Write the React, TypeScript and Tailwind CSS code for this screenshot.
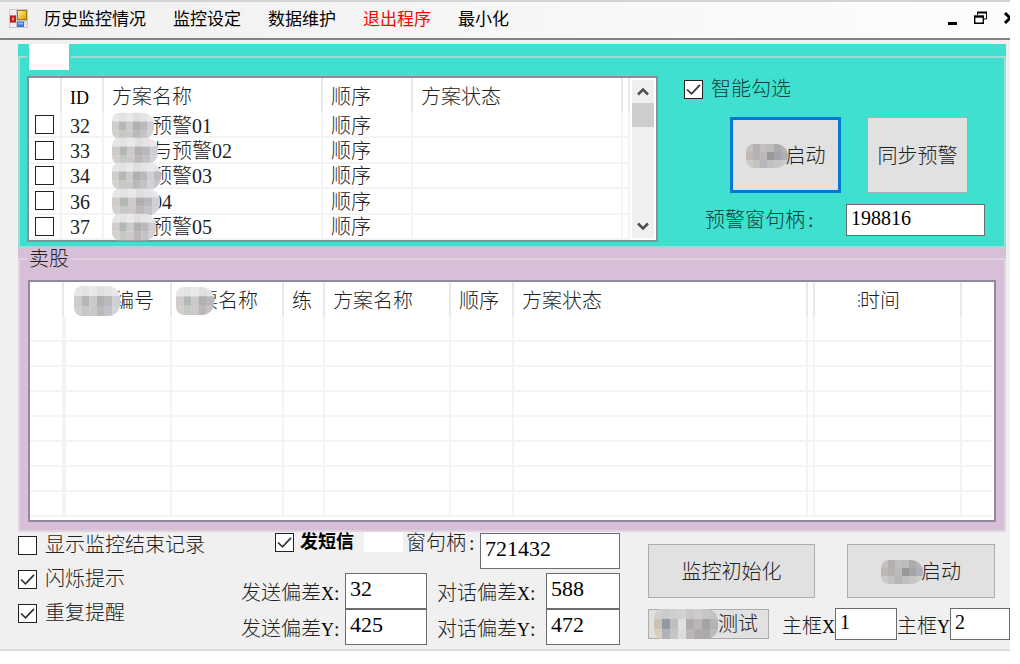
import type { ReactNode } from 'react';
import { clsx } from 'clsx';

const PLANS = [
  { id: 32, name: '预警01', cover: 42, order: '顺序' },
  { id: 33, name: '与预警02', cover: 46, order: '顺序' },
  { id: 34, name: '预警03', cover: 49, order: '顺序' },
  { id: 36, name: '04', cover: 48, order: '顺序' },
  { id: 37, name: '预警05', cover: 44, order: '顺序' },
];

// Block colours for the masked words, one row of 8px cells per line
const MASK_LIGHT = [
  ['#e6e6e6', '#e2e4e3', '#e9e9ea', '#dfdfe0', '#e4e4e6', '#e8e8ea', '#e4e4e4', '#e0e0e0'],
  ['#cfcdca', '#b3b8b6', '#cdcaca', '#b1afb0', '#b9b8bd', '#cfcfd6', '#bdbdbd', '#c8c8c8'],
  ['#d3d0cd', '#c6c8c6', '#cbc8c9', '#bcb8ba', '#c3c2c8', '#d2d2d7', '#c8c8c8', '#d0d0d0'],
];

const MASK_DARK = [
  ['#c4c1bd', '#b2b0b0', '#c2bfbf', '#bcbabb', '#acabac', '#b4b4b5', '#b0b0b0', '#b8b8b8'],
  ['#bdb8b4', '#b5b2b1', '#bcb9bb', '#999899', '#a3a4a9', '#adafb6', '#a9a5a6', '#a3a1a3'],
  ['#cfcac8', '#c3c2c3', '#b6b5ba', '#c2bfbf', '#c6c4c4', '#c9c9c9', '#c8c8c8', '#c0c0c0'],
];

const MASK_TEST = [
  ['#d3d0cb', '#c9cbcd', '#cfcfcf', '#d2d2d2', '#c8c8c8', '#cccccc', '#c6c6c6', '#c2c2c2'],
  ['#cdc1b3', '#929ba4', '#bfbfc1', '#e0e0e0', '#b2aaaa', '#bab6b6', '#a5a3a3', '#b5b3b3'],
  ['#d8cdbf', '#afb3b7', '#c5c5c6', '#dcdcdc', '#bdb6b8', '#b1abad', '#adaaac', '#bbb9b9'],
];

interface MaskProps {
  colors: string[][];
  space: string;
  width: number;
  height: number;
}

// Keeps the room of the hidden characters and lays the mosaic over it
function Mask({ colors, space, width, height }: MaskProps) {
  const cols = Math.ceil(width / 8);
  return (
    <span className={clsx('relative inline-block h-5 align-middle', space)}>
      <svg
        className="absolute left-0 top-1/2 z-10 max-w-none -translate-y-1/2 overflow-hidden rounded-l-lg rounded-r-xl"
        width={width}
        height={height}
        viewBox={`0 0 ${cols * 8} 24`}
        preserveAspectRatio="none"
        aria-hidden="true"
      >
        {colors.map((row, y) =>
          Array.from({ length: cols }, (_, x) => (
            <rect key={`${x}-${y}`} x={x * 8} y={y * 8} width="8.2" height="8.2" fill={row[x % row.length]} />
          )),
        )}
      </svg>
    </span>
  );
}

interface TickProps {
  label?: ReactNode;
  name: string;
  checked?: boolean;
  className?: string;
}

function Tick({ label, name, checked, className }: TickProps) {
  return (
    <label className={clsx('flex items-center gap-2 whitespace-nowrap', className)}>
      <span className="relative block size-[19px] shrink-0">
        <input
          type="checkbox"
          name={name}
          aria-label={label ? undefined : name}
          defaultChecked={checked}
          className="peer block size-[19px] appearance-none border border-[#222] bg-white"
        />
        <svg
          className="pointer-events-none absolute inset-0 hidden peer-checked:block"
          viewBox="0 0 19 19"
          fill="none"
          stroke="#333"
          strokeWidth="1.7"
        >
          <path d="M3 9.5 7.5 13.800 16 4.800" />
        </svg>
      </span>
      {label}
    </label>
  );
}

function Field({ id, value, className }: { id: string; value: string; className: string }) {
  return (
    <input
      id={id}
      type="text"
      defaultValue={value}
      className={clsx('min-w-0 border border-[#6a6d70] bg-white px-1 pb-1 font-normal text-black', className)}
    />
  );
}

function AppIcon() {
  return (
    <svg className="mb-[3px] size-[19px] shrink-0" viewBox="0 0 19 19" aria-hidden="true">
      <defs>
        <linearGradient id="gold" x1="0" y1="0" x2="1" y2="1">
          <stop offset="0" stopColor="#fff0a0" />
          <stop offset="1" stopColor="#e0a000" />
        </linearGradient>
      </defs>
      <rect width="19" height="19" fill="#c9c9c9" />
      <rect x="1" y="1" width="6" height="5" fill="#eeeeee" />
      <rect x="1" y="14" width="6" height="4" fill="#eeeeee" />
      <rect x="15" y="13" width="3" height="5" fill="#e4e4e4" />
      <rect x="1" y="6.500" width="6" height="7" fill="#b3201c" />
      <rect x="3" y="8.500" width="2" height="3" fill="#f0897c" />
      <rect x="8" y="1" width="10" height="10" fill="#a87600" />
      <rect x="9" y="2" width="8" height="8" fill="url(#gold)" />
      <rect x="8" y="12.500" width="7" height="5.500" fill="#3b74d6" />
      <rect x="9" y="13.500" width="5" height="2" fill="#8fb8f5" />
    </svg>
  );
}

function MenuBar() {
  return (
    <header className="flex h-10 items-center overflow-hidden border-t-2 border-b-2 border-t-[#d4d4d4] border-b-[#828282] bg-linear-to-r from-[#f0f0f0] to-[#fdfdfd] pl-[9px] text-[17px] leading-6 font-normal text-black">
      <AppIcon />
      <nav className="ml-4 flex flex-1 gap-[27px] whitespace-nowrap">
        <button type="button">历史监控情况</button>
        <button type="button">监控设定</button>
        <button type="button">数据维护</button>
        <button type="button" className="text-[#f00]">退出程序</button>
        <button type="button">最小化</button>
      </nav>
      <div className="-mr-[7px] mb-[5px] flex items-center gap-4">
        <button type="button" aria-label="最小化窗口">
          <svg width="12" height="14" viewBox="0 0 12 14"><path d="M2 11h9v3H2z" fill="#000" /></svg>
        </button>
        <button type="button" aria-label="还原窗口">
          <svg width="13" height="13" viewBox="0 0 13 13" fill="none" stroke="#000">
            <path d="M3.500 4V1.500h9V8H10" />
            <path d="M3 1.500h10" strokeWidth="2" />
            <path d="M.7 6v6.300h8.600V6" strokeWidth="1.400" />
            <path d="M0 5.500h10" strokeWidth="2.400" />
          </svg>
        </button>
        <button type="button" aria-label="关闭窗口">
          <svg width="14" height="12" viewBox="0 0 14 12" fill="none" stroke="#000" strokeWidth="3">
            <path d="M2 1l10 10M12 1 2 11" />
          </svg>
        </button>
      </div>
    </header>
  );
}

const TH = 'border-r-2 border-[#e9e9e9] px-2 pt-[3px] text-left font-light whitespace-nowrap';
const TD = 'border-r-2 border-b-2 border-[#f4f4f4] p-0';

function PlanList() {
  return (
    <div className="flex h-[166px] min-w-0 flex-1 border-2 border-[#80959a] bg-white">
      <table className="h-full flex-1 table-fixed border-separate border-spacing-0 leading-5 text-[#222]">
        <colgroup>
          <col className="w-[33px]" />
          <col className="w-[42px]" />
          <col className="w-[219px]" />
          <col className="w-[90px]" />
          <col />
          <col className="w-[7px]" />
        </colgroup>
        <thead>
          <tr className="h-[35px]">
            <th className={TH} />
            <th className={TH}><span className="text-lg leading-5 text-black">ID</span></th>
            <th className={TH}>方案名称</th>
            <th className={TH}>顺序</th>
            <th className={TH}>方案状态</th>
            <th className="border-r-2 border-[#e9e9e9] p-0" />
          </tr>
        </thead>
        <tbody>
          {PLANS.map((plan) => (
            <tr key={plan.id} className="h-[25px]">
              <td className={TD}>
                <Tick name={`plan-${plan.id}`} className="pl-[6px]" />
              </td>
              <td className={clsx(TD, 'pt-[2px] pl-2')}>{plan.id}</td>
              <td className={clsx(TD, 'pt-[2px] pl-2 whitespace-nowrap')}>
                <div className="flex h-5 items-center">
                  <Mask colors={MASK_LIGHT} space="w-10" width={plan.cover} height={27} />
                  {plan.name}
                </div>
              </td>
              <td className={clsx(TD, 'pt-[2px] pl-2')}>{plan.order}</td>
              <td className={TD} />
              <td className={TD} />
            </tr>
          ))}
        </tbody>
      </table>
      <div className="m-[2px] flex w-[22px] flex-col items-center bg-[#f0f0f0]">
        <button type="button" aria-label="向上滚动" className="flex h-[23px] items-center">
          <svg width="12" height="9" viewBox="0 0 12 9" fill="none" stroke="#505050" strokeWidth="2.600">
            <path d="M1 7.500l5-5 5 5" />
          </svg>
        </button>
        <div className="h-6 w-full bg-[#cdcdcd]" />
        <button type="button" aria-label="向下滚动" className="mt-auto flex h-[23px] items-center">
          <svg width="12" height="9" viewBox="0 0 12 9" fill="none" stroke="#505050" strokeWidth="2.600">
            <path d="M1 1.500l5 5 5-5" />
          </svg>
        </button>
      </div>
    </div>
  );
}

function AlertControls() {
  return (
    <div className="w-[346px] shrink-0 pt-[2px] pl-[26px] text-[#123f3b]">
      <Tick name="smart" label="智能勾选" checked className="h-[22px]" />
      <div className="mt-[17px] ml-[46px] flex gap-[26px] text-[#222]">
        <button type="button" className="flex h-[76px] w-[111px] items-center justify-center border-3 border-[#0078d7] bg-[#e1e1e1] pt-[2px]">
          <Mask colors={MASK_DARK} space="w-10" width={42} height={24} />
          启动
        </button>
        <button type="button" className="h-[76px] w-[101px] border border-[#adadad] bg-[#e1e1e1] pt-[2px]">同步预警</button>
      </div>
      <div className="mt-[11px] ml-[21px] flex items-center">
        <label htmlFor="alert-handle" className="w-[141px]">预警窗句柄<span className="pl-[3px]">:</span></label>
        <Field id="alert-handle" value="198816" className="h-8 w-[139px]" />
      </div>
    </div>
  );
}

function SellList() {
  return (
    <div className="h-[242px] border-2 border-[#8f8b9b] bg-white pr-[2px]">
      <table className="w-full table-fixed border-separate border-spacing-0 leading-5 text-[#222]">
        <colgroup>
          <col className="w-[34px]" />
          <col className="w-[108px]" />
          <col className="w-[112px]" />
          <col className="w-[41px]" />
          <col className="w-[126px]" />
          <col className="w-[63px]" />
          <col />
          <col className="w-[7px]" />
          <col className="w-[147px]" />
          <col className="w-[30px]" />
        </colgroup>
        <thead>
          <tr className="h-[35px]">
            <th className={TH} />
            <th className={TH}>
              <div className="flex items-center pl-[2px]">
                <Mask colors={MASK_LIGHT} space="w-10" width={46} height={30} />
                编号
              </div>
            </th>
            <th className="border-r-2 border-[#e9e9e9] px-1 pt-[3px] text-left font-light whitespace-nowrap">
              <div className="flex items-center">
                <Mask colors={MASK_LIGHT} space="w-[22px]" width={38} height={28} />
                票名称
              </div>
            </th>
            <th className={TH}>练</th>
            <th className={TH}>方案名称</th>
            <th className={TH}>顺序</th>
            <th className={TH}>方案状态</th>
            <th className="border-r-2 border-[#e9e9e9] p-0" />
            <th className={TH}>
              <div className="flex items-center pl-[35px]">
                <svg width="2" height="14" viewBox="0 0 2 14" aria-hidden="true">
                  <path d="M0 0h2v2H0zM0 6h2v2H0zM0 11h2v2H0z" fill="#8296a8" />
                </svg>
                时间
              </div>
            </th>
            <th className="p-0" />
          </tr>
        </thead>
        <tbody>
          {Array.from({ length: 8 }, (_, row) => (
            <tr key={row} className="h-[25px]">
              <td className={TD} />
              <td className={clsx(TD, 'border-l-2')} />
              <td className={TD} />
              <td className={TD} />
              <td className={TD} />
              <td className={TD} />
              <td className={TD} />
              <td className={TD} />
              <td className={TD} />
              <td className="border-b-2 border-[#f4f4f4] p-0" />
            </tr>
          ))}
        </tbody>
      </table>
    </div>
  );
}

function Offset({ id, text, axis, value, className }: { id: string; text: string; axis: string; value: string; className: string }) {
  return (
    <div className="flex items-center">
      <label htmlFor={id} className="flex-1 pt-1 whitespace-nowrap">
        {text}<span className="text-lg leading-5 text-black">{axis}</span>:
      </label>
      <Field id={id} value={value} className={clsx('h-9 text-[22px]', className)} />
    </div>
  );
}

function FooterPanel() {
  return (
    <footer className="flex h-[117px] pl-[18px] text-[#222]">
      <div className="flex w-[223px] shrink-0 flex-col gap-[11px] pt-[2px] leading-[23px]">
        <Tick name="log" label="显示监控结束记录" />
        <Tick name="flash" label="闪烁提示" checked />
        <Tick name="repeat" label="重复提醒" checked />
      </div>

      <div className="w-[379px] shrink-0">
        <div className="flex pl-[34px]">
          <Tick
            name="sms"
            checked
            className="h-5"
            label={<span className="-ml-[2px] text-lg leading-5 font-bold text-black">发短信</span>}
          />
          <span className="ml-[10px] h-5 w-[39px] bg-white" />
          <label htmlFor="sms-handle" className="ml-[3px] w-[74px] leading-[22px]">窗句柄<span className="pl-[3px]">:</span></label>
          <Field id="sms-handle" value="721432" className="mt-px h-9 w-[140px] text-[22px]" />
        </div>
        <div className="mt-1 flex gap-[10px]">
          <div className="w-[186px]">
            <Offset id="send-x" text="发送偏差" axis="X" value="32" className="w-[82px]" />
            <Offset id="send-y" text="发送偏差" axis="Y" value="425" className="w-[82px]" />
          </div>
          <div className="w-[183px]">
            <Offset id="talk-x" text="对话偏差" axis="X" value="588" className="w-[74px]" />
            <Offset id="talk-y" text="对话偏差" axis="Y" value="472" className="w-[74px]" />
          </div>
        </div>
      </div>

      <div className="ml-7 min-w-0 flex-1 pt-3">
        <div className="flex gap-8 pr-[15px]">
          <button type="button" className="h-[54px] flex-[167] border border-[#adadad] bg-[#e1e1e1] pt-[2px]">监控初始化</button>
          <button type="button" className="flex h-[54px] flex-[148] items-center justify-center border border-[#adadad] bg-[#e1e1e1] pt-[2px]">
            <Mask colors={MASK_DARK} space="w-10" width={42} height={24} />
            启动
          </button>
        </div>
        <div className="mt-[10px] flex items-center">
          <button type="button" className="flex h-[30px] w-[121px] items-center justify-end border border-[#adadad] bg-[#e1e1e1] pr-[10px]">
            <Mask colors={MASK_TEST} space="w-[64px]" width={64} height={30} />
            测试
          </button>
          <div className="ml-auto flex items-center whitespace-nowrap">
            <label htmlFor="frame-x" className="pt-1">主框<span className="text-lg leading-5 text-black">X</span></label>
            <Field id="frame-x" value="1" className="h-8 w-[62px]" />
            <label htmlFor="frame-y" className="pt-1">主框<span className="text-lg leading-5 text-black">Y</span></label>
            <Field id="frame-y" value="2" className="h-8 w-[60px]" />
          </div>
        </div>
      </div>
    </footer>
  );
}

export default function App() {
  return (
    <div className="min-h-screen bg-white pr-[10px] font-['Liberation_Serif','Noto_Sans_CJK_SC',serif] text-[20px] leading-[22px] font-light text-[#222]">
      <div className="overflow-hidden border-b-2 border-[#dcdcdc] bg-[#f0f0f0]">
        <MenuBar />
        <main className="mt-1 mr-1 ml-[18px]">
          <section className="bg-[#40e0d0]">
            <fieldset className="min-w-0 border-2 border-[#9adcd6] pb-1">
              <legend className="ml-[7px] px-[2px]">
                <span className="block h-[26px] w-10 bg-white" />
              </legend>
              <div className="flex pt-[6px] pl-[7px]">
                <PlanList />
                <AlertControls />
              </div>
            </fieldset>
          </section>
          <section className="bg-[#d8bfd8]">
            <fieldset className="min-w-0 border-2 border-[#dfd3df] pb-2">
              <legend className="ml-[7px] px-[2px]">卖股</legend>
              <div className="pt-[10px] pr-2 pl-2">
                <SellList />
              </div>
            </fieldset>
          </section>
        </main>
        <FooterPanel />
      </div>
    </div>
  );
}
